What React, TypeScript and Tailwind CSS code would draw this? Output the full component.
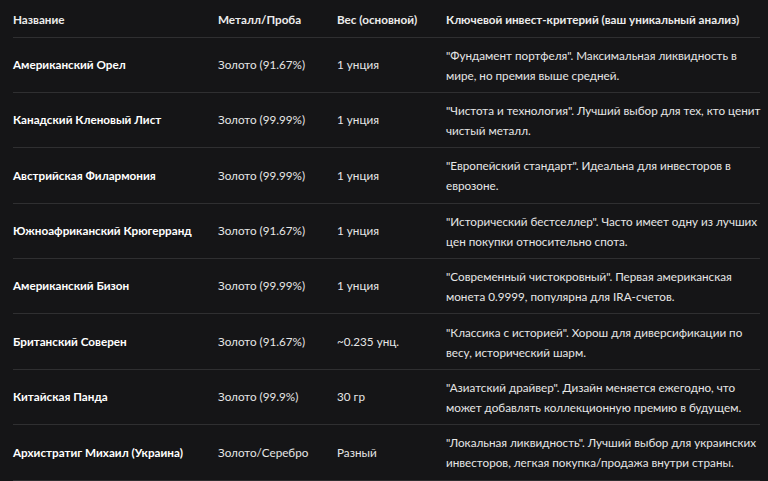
import React from "react";

const rows = [
  ["Американский Орел", "Золото (91.67%)", "1 унция", "\"Фундамент портфеля\". Максимальная ликвидность в мире, но премия выше средней."],
  ["Канадский Кленовый Лист", "Золото (99.99%)", "1 унция", "\"Чистота и технология\". Лучший выбор для тех, кто ценит чистый металл."],
  ["Австрийская Филармония", "Золото (99.99%)", "1 унция", "\"Европейский стандарт\". Идеальна для инвесторов в еврозоне."],
  ["Южноафриканский Крюгерранд", "Золото (91.67%)", "1 унция", "\"Исторический бестселлер\". Часто имеет одну из лучших цен покупки относительно спота."],
  ["Американский Бизон", "Золото (99.99%)", "1 унция", "\"Современный чистокровный\". Первая американская монета 0.9999, популярна для IRA-счетов."],
  ["Британский Соверен", "Золото (91.67%)", "~0.235 унц.", "\"Классика с историей\". Хорош для диверсификации по весу, исторический шарм."],
  ["Китайская Панда", "Золото (99.9%)", "30 гр", "\"Азиатский драйвер\". Дизайн меняется ежегодно, что может добавлять коллекционную премию в будущем."],
  ["Архистратиг Михаил (Украина)", "Золото/Серебро", "Разный", "\"Локальная ликвидность\". Лучший выбор для украинских инвесторов, легкая покупка/продажа внутри страны."],
];

const App = () => {
  return (
    <div className="h-[481px] w-[768px] overflow-hidden bg-[#151517] px-[13px] font-['Lato',sans-serif] text-[11.7px] text-[#e6e6e6]">
      <table className="w-[747px] table-fixed border-collapse">
        <thead>
          <tr className="h-[37px] border-b border-[#2f2f31] text-left">
            <th className="w-[205px] pt-1 font-bold text-[#ececec]">Название</th>
            <th className="w-[119px] pt-1 font-bold text-[#ececec]">Металл/Проба</th>
            <th className="w-[109px] pt-1 font-bold text-[#ececec]">Вес (основной)</th>
            <th className="pt-1 font-bold whitespace-nowrap text-[#ececec]">Ключевой инвест-критерий (ваш уникальный анализ)</th>
          </tr>
        </thead>
        <tbody>
          {rows.map((r) => (
            <tr key={r[0]} className="h-[55.4px] border-b border-[#2f2f31]">
              <td className="font-bold whitespace-nowrap text-white">{r[0]}</td>
              <td>{r[1]}</td>
              <td>{r[2]}</td>
              <td className="leading-[20px]">
                <div className="w-[322px]">{r[3]}</div>
              </td>
            </tr>
          ))}
        </tbody>
      </table>
    </div>
  );
};

export default App;
